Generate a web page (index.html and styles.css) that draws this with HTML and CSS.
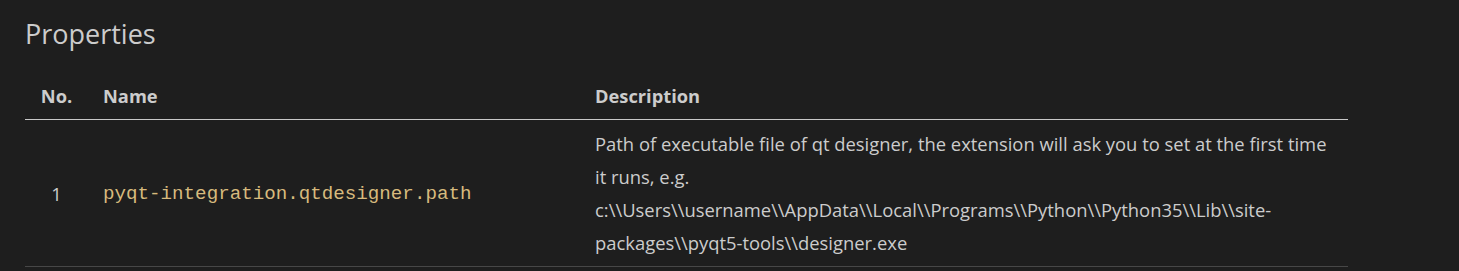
FILE: index.html
```html
<!DOCTYPE html>
<html>
<head>
<meta charset="utf-8">
<link rel="stylesheet" href="styles.css">
</head>
<body>
<div class="page">
  <h2 class="title">Properties</h2>
  <table class="props">
    <colgroup>
      <col class="c-no">
      <col class="c-name">
      <col class="c-desc">
    </colgroup>
    <thead>
      <tr>
        <th class="no">No.</th>
        <th>Name</th>
        <th>Description</th>
      </tr>
    </thead>
    <tbody>
      <tr>
        <td class="no">1</td>
        <td><code>pyqt-integration.qtdesigner.path</code></td>
        <td>Path of executable file of qt designer, the extension will ask you to set at the first time it runs, e.g. c:\\Users\\username\\AppData\\Local\\Programs\\Python\\Python35\\Lib\\site-packages\\pyqt5-tools\\designer.exe</td>
      </tr>
    </tbody>
  </table>
</div>
</body>
</html>
```
FILE: styles.css
```css
html, body {
  margin: 0;
  padding: 0;
  background: #1e1e1e;
}
body {
  color: #cccccc;
  font-family: "Open Sans", "Noto Sans", sans-serif;
  font-size: 18.4px;
}
.page {
  padding: 14px 0 0 25px;
}
.title {
  margin: 0;
  font-size: 27px;
  font-weight: 400;
  line-height: 40px;
  color: #cccccc;
}
.props {
  margin-top: 18px;
  border-collapse: collapse;
  width: 1323px;
  table-layout: fixed;
}
.c-no { width: 63px; }
.c-name { width: 492px; }
.c-desc { width: 768px; }
.props th, .props td {
  padding: 7px 15px;
  line-height: 33px;
  text-align: left;
  vertical-align: middle;
}
.props th {
  font-weight: 700;
  font-size: 18.3px;
  border-bottom: 1px solid #c8c8c8;
}
.props td {
  border-bottom: 1px solid #474747;
}
.props .no {
  text-align: center;
}
code {
  font-family: "Liberation Mono", monospace;
  font-size: 19.2px;
  color: #d7ba7d;
}
```
